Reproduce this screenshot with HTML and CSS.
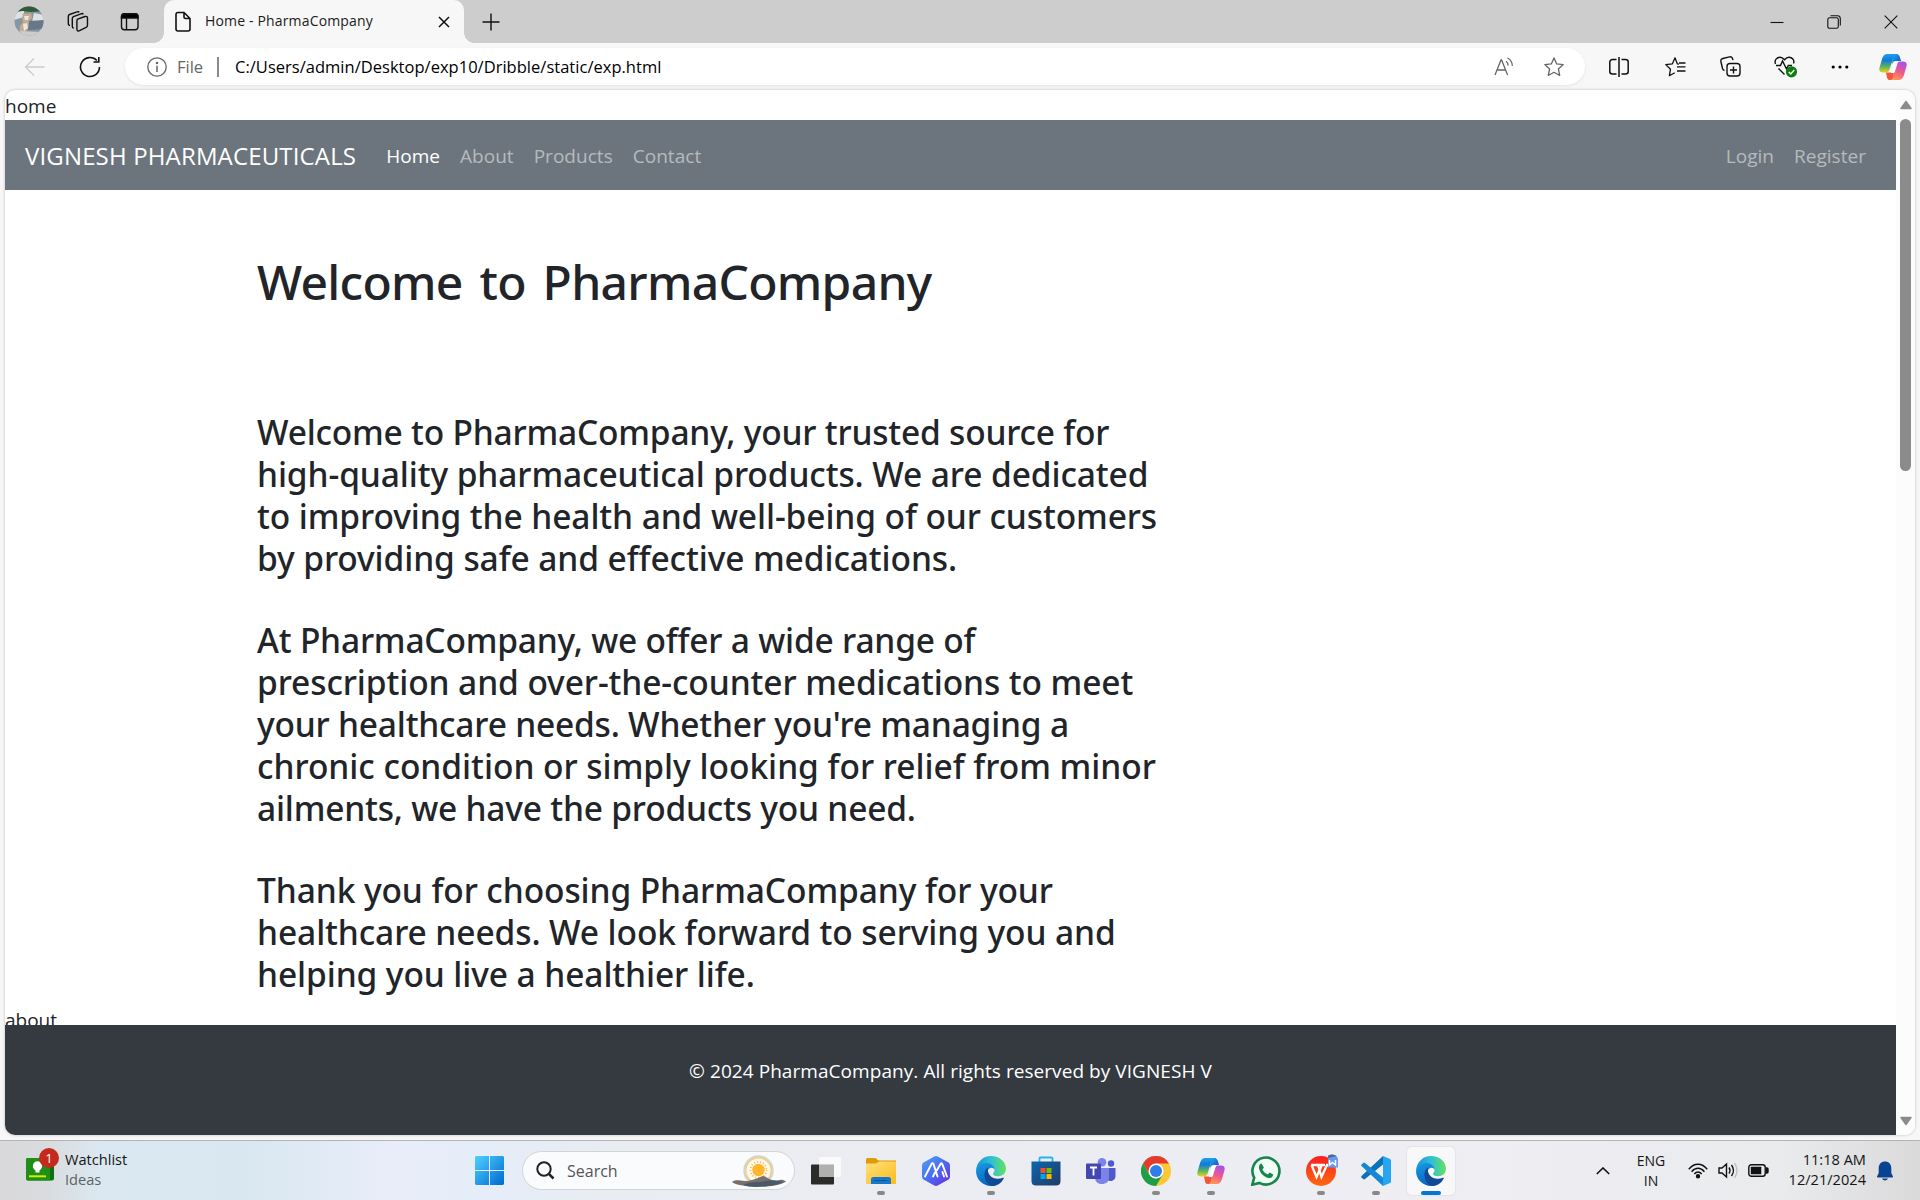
FILE: index.html
```html
<!DOCTYPE html>
<html lang="en">
<head>
<meta charset="utf-8">
<title>Home - PharmaCompany</title>
<link rel="stylesheet" href="styles.css">
</head>
<body>
<svg class="defs" width="0" height="0" aria-hidden="true">
  <defs>
    <linearGradient id="cpA" x1="0" y1="0" x2="0" y2="1"><stop offset="0" stop-color="#1aa0f0"/><stop offset=".35" stop-color="#1478d8"/><stop offset=".7" stop-color="#5cb85a"/><stop offset="1" stop-color="#f4cf1c"/></linearGradient>
    <linearGradient id="cpB" x1=".7" y1="0" x2=".3" y2="1"><stop offset="0" stop-color="#a653ea"/><stop offset=".5" stop-color="#f0588c"/><stop offset="1" stop-color="#ffa052"/></linearGradient>
    <linearGradient id="cpC" x1="0" y1="0" x2="1" y2="1"><stop offset="0" stop-color="#18b4f2"/><stop offset="1" stop-color="#1c3fc4"/></linearGradient>
    <linearGradient id="edA" x1="0" y1=".5" x2="1" y2=".5"><stop offset="0" stop-color="#1f8fdc"/><stop offset=".5" stop-color="#2fc0d8"/><stop offset="1" stop-color="#62e35c"/></linearGradient>
    <linearGradient id="edB" x1="0" y1="0" x2=".4" y2="1"><stop offset="0" stop-color="#159fe2"/><stop offset="1" stop-color="#0a62c4"/></linearGradient>
    <linearGradient id="win" x1="0" y1="0" x2="1" y2="1"><stop offset="0" stop-color="#4fd0ff"/><stop offset="1" stop-color="#0069cf"/></linearGradient>
    <linearGradient id="fold" x1="0" y1="0" x2="1" y2="1"><stop offset="0" stop-color="#ffe07a"/><stop offset="1" stop-color="#fdbb1e"/></linearGradient>
    <linearGradient id="hex" x1="0" y1="0" x2="1" y2="1"><stop offset="0" stop-color="#4aa5f2"/><stop offset=".5" stop-color="#4c6cf0"/><stop offset="1" stop-color="#6a28e4"/></linearGradient>
    <linearGradient id="bag" x1="0" y1="0" x2="1" y2="1"><stop offset="0" stop-color="#0d66ae"/><stop offset="1" stop-color="#223c66"/></linearGradient>
    <linearGradient id="wps" x1="0" y1="0" x2="0" y2="1"><stop offset="0" stop-color="#fb1d1d"/><stop offset="1" stop-color="#fd6a10"/></linearGradient>
    <symbol id="copilot" viewBox="0 0 28 26">
      <path d="M19 0H8.500C5.500 0 4 2 3.200 4.500L.7 13C-.4 16.500.8 18.500 4 18.500h3c2 0 3-1.400 3.500-3L14 5c.5-2 1-2.500 2.500-2.800z" fill="url(#cpA)"/>
      <path d="M14 0h3c2.500 0 3.400 1.500 4 3.500l1 3.500h-5c-2 0-3 .8-3.600 2.600L13 10z" fill="url(#cpC)"/>
      <path d="M9 26h10.500c3 0 4.500-2 5.300-4.500L27.300 13c1.100-3.500-.1-5.500-3.300-5.500h-3c-2 0-3 1.400-3.500 3L14 21c-.5 2-1 2.500-2.500 2.800z" fill="url(#cpB)"/>
      <path d="M7 18.500h3.500c2 0 3-.8 3.500-2.600L15.500 12.500 14.200 22c-.5 2.500-1.200 4-3.200 4-2.500 0-2.700-1.500-3.200-3.500z" fill="#f2573a"/>
      <path d="M15.200 8.500q.6-1.300 2-1.300h2L16 17.500q-.6 1.500-2 1.500h-2.200z" fill="#fff"/>
    </symbol>
    <symbol id="edge" viewBox="0 0 30 30">
      <path d="M0 15C.5 6 7 0 15 0c9 0 15 6.200 15 12.500 0 5-3.600 7.700-8 7.700-3.400 0-5-1.200-5-2.200 0-.8 1.500-1.600 1.500-4 0-3-3-6-8-6C5 8 1.500 11 0 15z" fill="url(#edA)"/>
      <path d="M0 15c1-5 5-8 10-8 5 0 8.500 3 8.500 6.500-1-1.500-2.500-2-4-1.500-2.500.7-4.500 4-3.500 8 1 4 4.500 8.500 9 9-9 3.500-20-3-20-14z" fill="url(#edB)"/>
      <path d="M8.500 18c0-3 1.500-5.500 4-6.500-1.500 3 0 6 1.500 8 3 3.500 8.500 4 13 2.200.8-.3 1 .4.6 1C25 27.500 20.500 30 16.500 30 11 29 8.500 23 8.500 18z" fill="#104a94"/>
    </symbol>
  </defs>
</svg>

<div class="window">
  <header class="tabstrip">
    <span class="cell profile">
      <svg width="30" height="30" viewBox="0 0 30 30"><clipPath id="av"><circle cx="15" cy="15" r="14.500"/></clipPath><g clip-path="url(#av)"><path fill="#8796a4" d="M0 0h30v30H0z"/><path fill="#2f5a35" d="M0 0h30v5L17 6 8 5 0 8z"/><path fill="#dde2e4" d="M0 6l10-1v6L0 14zM20 7l10 2v6l-12 1z"/><path fill="#687888" d="M15 15l15-1v9l-16 1z"/><path fill="#c4ad92" d="M9 7l4 1 4-1 1 5-3 3-1 7-3 6H5l1-8 3-4-1-4z"/><path fill="#efe6d9" d="M10 10h5l-1 4h-3zM9 18l4-1 1 5-4 3z"/><path fill="#c9cdd0" d="M6 25l22 1-3 5H9z"/></g></svg>
    </span>
    <span class="cell spaces">
      <svg width="22" height="22" viewBox="0 0 22 22" class="ln-icon"><path d="M10.700 8.200l7.200-2.700c1.500-.5 2.600.2 2.600 1.600v7.200c0 1-.5 1.700-1.400 2.100l-6.500 3.300c-1.500.7-2.700 0-2.700-1.500V9.700c0-.8.200-1.200.8-1.500zM6.800 17c-1 0-1.500-.6-1.500-1.600V7.600c0-1 .4-1.500 1.200-1.900L14 2.800c1-.4 1.900-.2 2.300.6M3 14.400c-1 0-1.700-.5-1.700-1.600V5.300c0-.9.400-1.500 1.200-1.800L10 .9c1-.4 1.800-.2 2.200.5"/></svg>
    </span>
    <span class="cell vtabs">
      <svg width="20" height="20" viewBox="0 0 20 20" class="ln-icon"><rect x="1.500" y="1.800" width="16.500" height="16" rx="3"/><path d="M1.500 5V4.500C1.500 3 2.800 1.800 4.500 1.800H15c1.700 0 3 1.200 3 2.700V6H1.500z" fill="#000"/><path d="M6.500 6v11.500"/></svg>
    </span>
    <div class="tab">
      <svg width="18" height="22" viewBox="0 0 18 22" class="ln-icon tab-file"><path d="M10 1.500H4C2.700 1.500 2 2.300 2 3.500v14.500c0 1.200.8 2 2 2h10c1.200 0 2-.8 2-2V7.500zM10 1.500V6c0 1 .5 1.500 1.500 1.500H16" stroke-width="1.600"/></svg>
      <span class="tab-title">Home - PharmaCompany</span>
      <svg width="12" height="12" viewBox="0 0 12 12" class="ln-icon"><path d="M1 1l10 10M11 1L1 11" stroke-width="1.500"/></svg>
    </div>
    <span class="cell newtab"><svg width="18" height="18" viewBox="0 0 18 18" class="ln-icon"><path d="M9 .5v17M.5 9h17"/></svg></span>
    <span class="grow"></span>
    <span class="cell wbtn"><svg width="14" height="14" viewBox="0 0 14 14" class="ln-icon"><path d="M.5 7.500h13" stroke-width="1.100"/></svg></span>
    <span class="cell wbtn"><svg width="14" height="14" viewBox="0 0 14 14" class="ln-icon win-line"><rect x=".8" y="2.800" width="10.500" height="10.500" rx="1.800"/><path d="M3.500.8h7c1.700 0 2.800 1.100 2.800 2.800v7"/></svg></span>
    <span class="cell wclose"><svg width="14" height="14" viewBox="0 0 14 14" class="ln-icon win-line"><path d="M.7.700l12.600 12.600M13.300.7L.7 13.300"/></svg></span>
  </header>

  <div class="toolbar">
    <span class="cell back"><svg width="22" height="20" viewBox="0 0 22 20"><path d="M10 1.500L1.500 10l8.500 8.500M1.500 10h19" fill="none" stroke="#cbcbcb" stroke-width="1.300"/></svg></span>
    <span class="cell reload"><svg width="22" height="22" viewBox="0 0 22 22" class="ln-icon"><path d="M20.500 11a9.500 9.500 0 1 1-2.600-6.500M19.800 1v5h-5.300" stroke-width="1.600"/></svg></span>
    <div class="address">
      <svg width="20" height="20" viewBox="0 0 20 20" class="gray-icon"><circle cx="10" cy="10" r="9.200"/><path d="M10 8.800V15" stroke-width="1.500"/><circle cx="10" cy="5.900" r=".6" fill="#666"/></svg>
      <span class="scheme">File</span>
      <span class="sep"></span>
      <span class="url">C:/Users/admin/Desktop/exp10/Dribble/static/exp.html</span>
      <span class="grow"></span>
      <span class="cell abtn"><svg width="20" height="20" viewBox="0 0 20 20" class="gray-icon"><path d="M1 18L7 3h.6l6 15M3 13h8.600M12 4.200c1.400 1 2.100 2.400 2.100 4.300M13.500 1c3 1.500 4.800 4.200 4.800 8"/></svg></span>
      <span class="cell abtn"><svg width="20" height="20" viewBox="0 0 20 20" class="gray-icon"><path d="M10 .9l2.700 6 6.500.7-4.800 4.400 1.300 6.500L10 15.300l-5.700 3.200 1.300-6.500L.8 7.600l6.500-.7z" stroke-linejoin="round"/></svg></span>
    </div>
    <span class="cell t1"><svg width="20" height="20" viewBox="0 0 20 20" class="ln-icon"><path d="M7.500 2.500H3.500c-1.500 0-2.700 1-2.700 2.500v9.500c0 1.500 1.200 2.500 2.700 2.500h4M12.500 2.500h4c1.500 0 2.700 1 2.700 2.500v9.500c0 1.500-1.200 2.500-2.700 2.500h-4M10 0v20" stroke-width="1.500"/></svg></span>
    <span class="cell t1"><svg width="21" height="20" viewBox="0 0 21 20" class="ln-icon"><path d="M14 7.200L12.300 6.800 10 .8 7.400 6.800.8 7.600l4.700 4.600-1.100 6.500 5.300-3M12 9.800h8.500M14 6h6.500M12 14h8.500" stroke-width="1.300" stroke-linejoin="round"/></svg></span>
    <span class="cell t2"><svg width="21" height="21" viewBox="0 0 21 21" class="ln-icon"><rect x="7" y="7.500" width="13" height="12.500" rx="3"/><path d="M13.500 10.500v7M10 14h7M4.500 14.500c-1-.3-1.700-1-2-2L.9 5.500C.6 4 1.300 2.900 2.800 2.500L9.500.9c1.600-.3 2.800.5 3.200 2l.2 1.300"/></svg></span>
    <span class="cell t2"><svg width="24" height="22" viewBox="0 0 24 22" class="ln-icon"><path d="M1.500 8C0 4 3 1.200 6 1.200c2 0 3.200 1 4.500 2.500 1.300-1.500 2.500-2.500 4.500-2.500 3 0 5.800 2.800 4.500 6.300M2 9.500h4.500L8.500 5l4 8 1.800-3.500H18M4.500 12.500l6 6"/><circle cx="17.500" cy="15.800" r="5.600" fill="#107c10" stroke="none"/><path d="M14.800 16l2 2 3.500-4" stroke="#fff" stroke-width="1.500"/></svg></span>
    <span class="cell t3"><svg width="18" height="6" viewBox="0 0 18 6"><circle cx="2.200" cy="3" r="1.600"/><circle cx="9" cy="3" r="1.600"/><circle cx="15.800" cy="3" r="1.600"/></svg></span>
    <span class="cell t4"><svg width="28" height="26"><use href="#copilot"/></svg></span>
  </div>

  <div class="frame">
    <div class="viewport">
      <div class="page">
        <div class="marker">home</div>
        <nav class="navbar">
          <a class="brand">VIGNESH PHARMACEUTICALS</a>
          <a class="link active">Home</a>
          <a class="link">About</a>
          <a class="link">Products</a>
          <a class="link">Contact</a>
          <span class="grow"></span>
          <a class="link">Login</a>
          <a class="link">Register</a>
        </nav>
        <main class="content">
          <h1>Welcome to PharmaCompany</h1>
          <h3>Welcome to PharmaCompany, your trusted source for<br><span class="loose">high-quality pharmaceutical products. We are dedicated<br>to improving the health and well-being of our customers<br>by providing safe and effective medications.</span></h3>
          <h3>At PharmaCompany, we offer a wide range of<br><span class="loose">prescription and over-the-counter medications to meet</span><br>your healthcare needs. Whether you're managing a<br><span class="looser">chronic condition or simply looking for relief from minor</span><br>ailments, we have the products you need.</h3>
          <h3><span class="loose">Thank you for choosing PharmaCompany for your<br>healthcare needs. We look forward to serving you and<br>helping you live a healthier life.</span></h3>
        </main>
        <div class="marker">about</div>
        <footer class="footer">© 2024 PharmaCompany. All rights reserved by VIGNESH V</footer>
      </div>
      <div class="scrollbar">
        <svg width="14" height="10" viewBox="0 0 14 10"><path d="M7 1.500L12 8.500H2z" fill="#8b8b8b" stroke="#8b8b8b" stroke-width="1.500" stroke-linejoin="round"/></svg>
        <div class="thumb"></div>
        <span class="grow"></span>
        <svg width="14" height="10" viewBox="0 0 14 10"><path d="M7 8.500L2 1.500h10z" fill="#8b8b8b" stroke="#8b8b8b" stroke-width="1.500" stroke-linejoin="round"/></svg>
      </div>
    </div>
  </div>
</div>

<div class="taskbar">
  <div class="widget">
    <span class="widget-icon">
      <svg width="28" height="23" viewBox="0 0 28 23"><rect width="28" height="22.500" rx="2" fill="#107010"/><path d="M2 0h22v22.500H2a2 2 0 0 1-2-2V2a2 2 0 0 1 2-2z" fill="#1f8f16"/><path d="M3 17.300h17v2H3z" fill="#d4f000"/><circle cx="11.500" cy="8" r="4.700" fill="#fff"/><path d="M9.500 11h4v3.500h-4z" fill="#fff"/></svg>
      <b class="badge">1</b>
    </span>
    <span class="widget-text">Watchlist<br><span class="sub">Ideas</span></span>
  </div>
  <div class="dock">
    <span class="start"><svg width="29" height="29" viewBox="0 0 29 29"><path fill="url(#win)" d="M1 0h13v14H0V1zM15 0h13l1 1v13H15zM0 15h14v14H1l-1-1zM15 15h14v13l-1 1H15z"/></svg></span>
    <div class="search">
      <svg width="19" height="19" viewBox="0 0 19 19" class="search-icon"><circle cx="8" cy="8" r="6.700"/><path d="M12.800 12.800L17.500 17.500" stroke-width="2.500"/></svg>
      <span class="search-text">Search</span>
      <span class="grow"></span>
      <svg width="56" height="34" viewBox="0 0 56 34"><circle cx="27.500" cy="16.500" r="14.500" fill="#fff8ee" stroke="#b7dfe8" stroke-width="1.500"/><circle cx="27.500" cy="16.500" r="13" fill="none" stroke="#f8c98a" stroke-width="2"/><circle cx="27.500" cy="16" r="8" fill="none" stroke="#f8ba35" stroke-width="1.800" stroke-dasharray="1 2"/><circle cx="27.500" cy="16" r="6.200" fill="#ffb52c"/><path d="M1 28c5-3 7-1 13-1 6 0 9-2 13-3 3-1.500 5-3 7-1.500 4 2.500 8 4.500 12 4 3-.8 6-1.500 9 1-4 3-12 4.500-21 5-12 .5-28-.5-33-4.500z" fill="#77706d"/><path d="M12 31c8-4 15-2 22-4s14 0 18 1c-5 4-32 7-40 3z" fill="#4a5968"/></svg>
    </div>
    <span class="app"><svg width="30" height="30" viewBox="0 0 30 30"><rect x="0" y="8.500" width="23" height="20" rx="1" fill="#2b2b2a"/><rect x="8" y="1" width="22" height="20" rx="1" fill="#fbfbfb" opacity=".92"/><path d="M8 8.500h15V21H8z" fill="#b0b0b0"/></svg></span>
    <span class="app"><svg width="30" height="30" viewBox="0 0 30 30"><path d="M0 8V3.500A1.500 1.500 0 0 1 1.500 2H9c2 0 2 2.500 4 2.500h17V9z" fill="#e09c05"/><path d="M0 7.500h9c2 0 3-2 5-2h15a1 1 0 0 1 1 1V28H0z" fill="url(#fold)"/><path d="M5 28v-4.500A2.500 2.500 0 0 1 7.500 21h15a2.500 2.500 0 0 1 2.500 2.500V28z" fill="#1478cd"/><path d="M8.500 24.500h13" stroke="#0a4f94"/></svg><i class="dot"></i></span>
    <span class="app"><svg width="30" height="30" viewBox="0 0 30 30"><path d="M13.300.5q1.700-.8 3.400 0l10.800 6q1.500 1 1.500 3v11q0 2-1.500 3l-10.800 6q-1.700.8-3.400 0l-10.800-6q-1.500-1-1.500-3v-11q0-2 1.500-3z" fill="url(#hex)"/><path d="M4 20.500L10.500 8q1-1.800 2 0l4 12.500M12 20.500l2-4M16 14l3.500-6q1-1.500 1.800.2L26 20.500M21.500 16l1.500 4.500" fill="none" stroke="#fff" stroke-width="1.900" stroke-linecap="round"/></svg></span>
    <span class="app"><svg width="30" height="30"><use href="#edge"/></svg><i class="dot"></i></span>
    <span class="app"><svg width="30" height="30" viewBox="0 0 30 30"><path d="M8.500 6V2.500Q8.500 1.500 9.500 1.500h11q1 0 1 1V6" fill="none" stroke="#22b5f2" stroke-width="1.800"/><path d="M.5 5.500h29V25q0 4.500-4.500 4.500H5Q.5 29.500.5 25z" fill="url(#bag)"/><path d="M9.500 12h5v5h-5z" fill="#f2502a"/><path d="M15.500 12h5v5h-5z" fill="#7fba00"/><path d="M9.500 18h5v5h-5z" fill="#00a4ef"/><path d="M15.500 18h5v5h-5z" fill="#ffb900"/></svg></span>
    <span class="app"><svg width="30" height="30" viewBox="0 0 30 30"><circle cx="25" cy="7.500" r="3.200" fill="#5059c9"/><path d="M20 12h9.500v8c0 3.500-2.500 5-5 5s-4-1-4.500-2z" fill="#5059c9"/><circle cx="16" cy="6.200" r="4.300" fill="#7b83eb"/><path d="M9 12h14v9c0 5-3 7-7 7s-6.500-2-7-6z" fill="#7b83eb"/><rect y="7.500" width="15" height="15.500" rx="1" fill="#4348b0"/><path d="M4 11.500h7M7.500 11.500v8" stroke="#fff" stroke-width="1.800"/></svg></span>
    <span class="app"><svg width="30" height="30" viewBox="0 0 30 30"><circle cx="15" cy="15" r="15" fill="#fcc934"/><path d="M2 7.500A15 15 0 0 1 28 7.500H15L9 19z" fill="#e33b2e"/><path d="M2 7.500L8.500 18.700Q11 22.500 15 22.500l6.500-3.500L15 30A15 15 0 0 1 2 7.500z" fill="#1e9e4b"/><circle cx="15" cy="15" r="7.500" fill="#fff"/><circle cx="15" cy="15" r="6" fill="#2f7de9"/></svg><i class="dot"></i></span>
    <span class="app"><svg width="28" height="26"><use href="#copilot"/></svg><i class="dot"></i></span>
    <span class="app"><svg width="30" height="30" viewBox="0 0 30 30"><path d="M1.300 28.700l1.900-7A13.500 13.500 0 1 1 8.500 26.900z" fill="#f2fff6" stroke="#17854d" stroke-width="2.600"/><path d="M10.500 7.500c-2 .5-3 2.500-2.500 5 1.300 5 5 8.500 9.500 9.500 2.500.4 4.500-1 4.700-3.500l-3.500-2-2 2c-2.500-1-4.300-2.700-5.300-5l1.500-2z" fill="#17854d"/></svg></span>
    <span class="app"><svg width="34" height="34" viewBox="0 0 34 34"><circle cx="17" cy="17" r="15" fill="url(#wps)"/><path d="M7 11h14M7.500 11l5 12 5-11M14 11l3.500 12 5.500-12h3" fill="none" stroke="#fff" stroke-width="2.300"/><path d="M24 1.500q3-2 8 0l2 3v9H24z" fill="#649af5"/><path d="M24 4V2q4-3 8.500 0z" fill="#596273"/><path d="M25.500 6v5l3-2.500 3 2.500V6" fill="none" stroke="#fff" stroke-width="1.500"/></svg><i class="dot"></i></span>
    <span class="app"><svg width="30" height="30" viewBox="0 0 30 30"><path d="M22 0v8.500L4 23q-1 .8-1.800 0l-1.700-1.500q-.8-.8 0-1.600z" fill="#0b72b9"/><path d="M22 30v-8.500L4 7q-1-.8-1.800 0L.5 8.500q-.8.800 0 1.600z" fill="#1488d2"/><path d="M22 0l7 3q1 .5 1 1.500v21q0 1-1 1.500l-7 3z" fill="#27a4f2"/></svg><i class="dot"></i></span>
    <span class="app current"><svg width="30" height="30"><use href="#edge"/></svg><i class="dot"></i></span>
  </div>
  <div class="tray">
    <svg width="14" height="8" viewBox="0 0 14 8" class="tray-line"><path d="M.8 7L7 1l6.200 6" stroke-width="1.600"/></svg>
    <span class="lang">ENG<br>IN</span>
    <svg width="20" height="16" viewBox="0 0 20 16" class="tray-line wifi"><path d="M.8 6.200C6-.4 14-.4 19.200 6.200M3.600 8.700c3.700-4.600 9.100-4.600 12.800 0M6.300 11c2.200-2.700 5.200-2.700 7.400 0"/><circle cx="10" cy="13.300" r="1.500" fill="#111"/></svg>
    <svg width="20" height="17" viewBox="0 0 20 17" class="tray-line sound"><path d="M1 6v5h3l4.500 4V2L4 6zM11 5.500q2 3 0 6M13.500 3q4 5.500 0 11"/><path d="M16.500 1q5 7.500 0 15" stroke="#c0c0c0"/></svg>
    <svg width="21" height="13" viewBox="0 0 21 13" class="tray-line battery"><rect x=".8" y=".8" width="16.400" height="11.400" rx="2.500"/><rect x="2.800" y="2.800" width="10.500" height="7.400" rx=".5" fill="#111" stroke="none"/><path d="M18.500 4h.5q1 0 1 1v3q0 1-1 1h-.5z" fill="#111"/></svg>
    <span class="clock">11:18 AM<br>12/21/2024</span>
    <svg width="16" height="20" viewBox="0 0 16 20" class="bell"><path d="M8 .5c3.700 0 6.300 2.700 6.300 6.500v5L16 15.500q.2 1-.8 1H.8q-1 0-.8-1L1.700 12V7C1.700 3.200 4.300.5 8 .5zM5 17.500h6q-.7 2-3 2t-3-2z" fill="#0a4292"/></svg>
  </div>
</div>
</body>
</html>
```
FILE: styles.css
```css
* { box-sizing: border-box; }
html, body { margin: 0; height: 100%; overflow: hidden; }
body {
  width: 1920px;
  height: 1200px;
  display: flex;
  flex-direction: column;
  font-family: "Open Sans", "Noto Sans", sans-serif;
  color: #212529;
  background: #f7f7f7;
}
svg { display: block; flex: none; }
.defs { position: absolute; }
.grow { flex: 1; }
.cell { display: flex; align-items: center; justify-content: center; flex: none; }
.ln-icon { fill: none; stroke: #111; stroke-width: 1.4; }
.ln-icon.win-line { stroke-width: 1.1; }
.gray-icon { fill: none; stroke: #666; stroke-width: 1.3; }

/* browser window */
.window { height: 1141px; display: flex; flex-direction: column; border-bottom: 1px solid #b4b4b6; }
.tabstrip { height: 43px; display: flex; background: #cdcdcd; }
.tabstrip .profile { width: 56px; padding: 0 0 2px 1px; }
.spaces { width: 43px; }
.vtabs { width: 65px; padding-right: 3px; }
.tab {
  position: relative;
  width: 300px;
  display: flex;
  align-items: center;
  padding: 0 14px 0 10px;
  background: #f7f7f7;
  border-radius: 10px 10px 0 0;
}
.tab::before, .tab::after {
  content: "";
  position: absolute;
  bottom: 0;
  width: 10px;
  height: 10px;
}
.tab::before { left: -10px; background: radial-gradient(circle at 0 0, #cdcdcd 9.5px, #f7f7f7 10px); }
.tab::after { right: -10px; background: radial-gradient(circle at 100% 0, #cdcdcd 9.5px, #f7f7f7 10px); }
.tab-title { font-size: 14px; letter-spacing: .16px; color: #1b1b1b; margin: 0 auto 2px 13px; white-space: nowrap; }
.newtab { width: 53px; }
.wbtn { width: 57px; }
.wclose { width: 58px; }

.toolbar { height: 47px; display: flex; align-items: center; }
.back { width: 70px; }
.reload { width: 40px; margin-right: 15px; }
.address {
  width: 1460px;
  height: 37px;
  display: flex;
  align-items: center;
  padding: 0 6px 0 22px;
  border-radius: 19px;
  background: #fff;
  box-shadow: 0 1px 3px rgba(0, 0, 0, .08);
  font-size: 16.5px;
  white-space: nowrap;
}
.scheme { width: 40px; margin-left: 10px; color: #666; }
.sep { width: 2px; height: 20px; background: #8a8a8a; }
.url { margin-left: 16px; color: #000; letter-spacing: .02px; }
.abtn { width: 50px; }
.t1 { width: 56px; }
.t1:nth-child(4) { margin-left: 6px; }
.t2 { width: 55px; }
.t3 { width: 54px; }
.t4 { width: 52px; }

.frame { height: 1050px; padding: 0 5px; }
.viewport {
  height: 1045px;
  display: flex;
  overflow: hidden;
  border-radius: 10px;
  background: #fff;
  box-shadow: 0 0 3px rgba(0, 0, 0, .25);
}
.page { position: relative; flex: 1; font-size: 19px; line-height: 30px; }
.scrollbar {
  width: 19px;
  display: flex;
  flex-direction: column;
  align-items: center;
  padding: 10px 0 9px;
  background: #fcfcfc;
}
.thumb { width: 11px; height: 352px; margin-top: 9px; border-radius: 6px; background: #8b8b8b; }

/* web page */
.marker { height: 30px; line-height: 32px; }
.navbar { height: 70px; display: flex; align-items: center; padding: 2px 20px 0 20px; background: #6c757d; white-space: nowrap; }
.brand { font-size: 24px; letter-spacing: .15px; color: #fff; margin-right: 20px; }
.link { padding: 0 10px; letter-spacing: .03px; color: rgba(255, 255, 255, .5); }
.link.active { color: #fff; }
.content { height: 814px; padding: 62px 0 0 252px; }
h1, h3 { margin: 0; font-family: "Noto Sans", "Open Sans", sans-serif; font-weight: 500; white-space: nowrap; }
h1 { font-size: 48px; line-height: 60px; letter-spacing: -.7px; word-spacing: 5px; margin-bottom: 99px; }
h3 { font-size: 33.5px; line-height: 42px; letter-spacing: -.2px; margin-bottom: 40px; }
.loose { letter-spacing: -.09px; }
.looser { letter-spacing: -.02px; }
.footer {
  position: absolute;
  left: 0;
  right: 0;
  bottom: 0;
  height: 110px;
  padding-top: 31px;
  background: #343a40;
  color: #fff;
  letter-spacing: .06px;
  text-align: center;
}

/* taskbar */
.taskbar {
  height: 59px;
  display: grid;
  grid-template-columns: 462px 1fr 330px;
  background: linear-gradient(90deg, #d9d9da 0, #d9dbde 45px, #dbe8f1 100px, #d8e7f0 240px, #e8edf9 390px, #e5edf9 480px, #e9ecf1 620px, #ecedf2 1100px, #eeeef3 1500px, #eaebed 1780px, #dadadb 1920px);
  color: #161616;
  font-size: 14.6px;
  line-height: 20px;
}
.widget { display: flex; padding: 9px 0 0 26px; }
.widget-icon { position: relative; padding-top: 8px; }
.badge {
  position: absolute;
  left: 13px;
  top: -2px;
  width: 20px;
  height: 20px;
  border-radius: 50%;
  background: #c42b1c;
  color: #fff;
  font-size: 13px;
  font-weight: 400;
  text-align: center;
}
.widget-text { margin: -1px 0 0 11px; }
.sub { color: #5c6268; }
.dock { display: flex; align-items: center; }
.start { width: 60px; padding-left: 13px; }
.search {
  width: 273px;
  height: 39px;
  margin-right: 3px;
  display: flex;
  align-items: center;
  padding: 0 7px 0 13px;
  border-radius: 20px;
  background: #fafbfd;
  border: 1px solid #d2d4d8;
}
.search-icon { fill: none; stroke: #222; stroke-width: 2; }
.search-text { margin-left: 12px; font-size: 16px; color: #555; }
.app { position: relative; width: 55px; height: 48px; display: flex; align-items: center; justify-content: center; flex: none; }
.app.current { width: 48px; margin-left: 4px; background: #f8f8fb; border-radius: 5px; box-shadow: 0 0 1px 1px #e4e4e8; }
.dot { position: absolute; bottom: 0; left: 50%; width: 8px; height: 4px; margin-left: -4px; border-radius: 2px; background: #888; }
.current .dot { width: 20px; margin-left: -10px; background: #0078d4; }
.tray { display: flex; align-items: center; padding-left: 6px; }
.tray-line { fill: none; stroke: #111; stroke-width: 1.4; }
.lang { width: 60px; margin-left: 11px; text-align: center; font-size: 14px; }
.wifi { margin-left: 7px; }
.sound { margin-left: 10px; }
.battery { margin-left: 10px; }
.clock { width: 97px; margin-top: -3px; text-align: right; }
.bell { margin-left: 11px; }
```
